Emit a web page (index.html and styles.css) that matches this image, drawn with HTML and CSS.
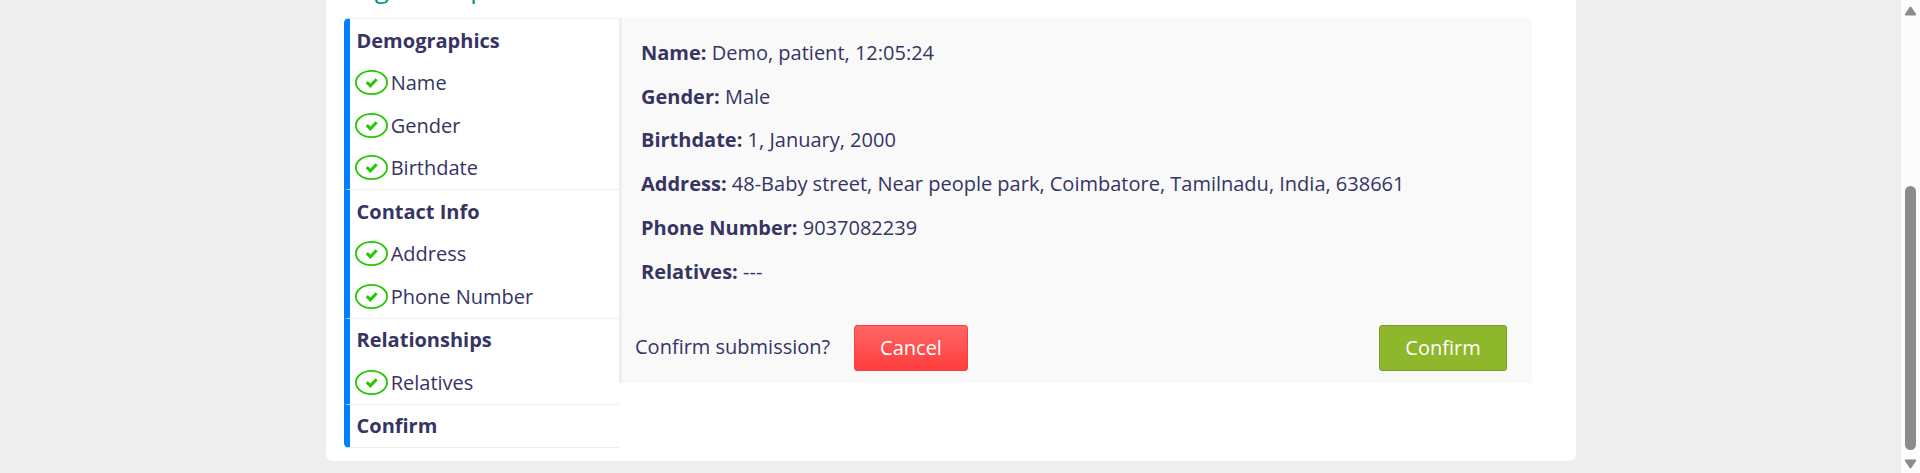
FILE: index.html
```html
<!DOCTYPE html>
<html lang="en">
<head>
<meta charset="utf-8">
<title>Register a patient</title>
<link rel="stylesheet" href="styles.css">
</head>
<body>
<svg class="defs" width="0" height="0"><defs>
<symbol id="check" viewBox="0 0 33 25"><ellipse cx="16.5" cy="12.5" rx="15.6" ry="11.6" fill="none" stroke="#24c800" stroke-width="1.8"/><path d="M11.8 12.1l3.6 3.7 6.2-6.5" fill="none" stroke="#24c800" stroke-width="3"/></symbol>
</defs></svg>
<div class="page">
<main class="card">
<h2 class="title">Register a patient</h2>
<div class="form">
<ul class="steps">
<li class="section s4"><b>Demographics</b>
<span><svg class="tick"><use href="#check"/></svg>Name</span>
<span><svg class="tick"><use href="#check"/></svg>Gender</span>
<span><svg class="tick"><use href="#check"/></svg>Birthdate</span></li>
<li class="section s3"><b>Contact Info</b>
<span><svg class="tick"><use href="#check"/></svg>Address</span>
<span><svg class="tick"><use href="#check"/></svg>Phone Number</span></li>
<li class="section s2"><b>Relationships</b>
<span><svg class="tick"><use href="#check"/></svg>Relatives</span></li>
<li class="section s1"><b>Confirm</b></li>
</ul>
<section class="panel">
<div class="details">
<p><b>Name:</b> Demo, patient, 12:05:24</p>
<p><b>Gender:</b> Male</p>
<p><b>Birthdate:</b> 1, January, 2000</p>
<p><b>Address:</b> 48-Baby street, Near people park, Coimbatore, Tamilnadu, India, 638661</p>
<p><b>Phone Number:</b> 9037082239</p>
<p><b>Relatives:</b> ---</p>
</div>
<div class="actions">
<span class="question">Confirm submission?</span>
<button class="btn cancel">Cancel</button>
<button class="btn confirm">Confirm</button>
</div>
</section>
</div>
</main>
</div>
<div class="scrollbar">
<svg class="arrow" viewBox="0 0 13 10"><path d="M6.5 1.5L11.2 8.5H1.8z"/></svg>
<div class="thumb"></div>
<svg class="arrow" viewBox="0 0 13 10"><path d="M6.5 8.5L1.8 1.5h9.4z"/></svg>
</div>
</body>
</html>
```
FILE: styles.css
```css
* { box-sizing: border-box; }
body {
  margin: 0;
  height: 473px;
  overflow: hidden;
  display: flex;
  background: #eee;
  color: #363463;
  font: 20px/27px "Open Sans", sans-serif;
}
.defs { position: absolute; }
.page { flex: 1; padding-left: 326px; }
.card {
  width: 1250px;
  height: 461px;
  padding: 0 18px;
  background: #fff;
  border-radius: 0 0 6px 6px;
}
.title {
  height: 18px;
  margin: 0;
  padding-bottom: 12px;
  display: flex;
  align-items: flex-end;
  color: #009384;
  font-size: 26px;
  font-weight: 400;
  line-height: 36px;
}
.form { display: flex; align-items: flex-start; }
.steps {
  width: 275px;
  margin: 0;
  padding: 0;
  list-style: none;
}
.section {
  display: flex;
  flex-direction: column;
  border-left: 6px solid #007fff;
  border-bottom: 1px solid #eee;
}
.section:first-child { border-top: 1px solid #eee; border-top-left-radius: 5px; }
.section:last-child { border-bottom-left-radius: 5px; }
.section b, .section span { display: flex; align-items: center; }
.section b { height: 41px; margin-bottom: 1px; padding-left: 6.5px; }
.section.s4 b, .section.s3 b { height: 42px; margin-bottom: 0; padding-top: 1px; }
.section span { flex: 1; padding-left: 5px; }
.s4 { height: 172px; }
.s3 { height: 129px; }
.s2 { height: 86px; }
.s1 { height: 43px; }
.tick { width: 33px; height: 25px; margin-right: 2.7px; }
.panel {
  width: 913px;
  height: 365px;
  border-left: 3px solid #eee;
  background: #f9f9f9;
  display: flex;
  flex-direction: column;
}
.details { padding: 21px 0 0 19px; }
.details p { margin: 0 0 16.74px; white-space: nowrap; }
.actions {
  margin-top: auto;
  padding: 0 25px 12px 13px;
  display: flex;
  align-items: center;
}
.question { width: 219px; padding-bottom: 3px; }
.btn {
  height: 46px;
  padding: 0 0 2px;
  border-radius: 3px;
  color: #fff;
  font: inherit;
}
.cancel { width: 114px; border: 1px solid #ff3d3d; background: linear-gradient(#ff6666, #ff3d3d); }
.confirm { width: 128px; margin-left: auto; border: 1px solid #7a9e25; background: #8fb72b; }
.scrollbar {
  width: 19px;
  height: 473px;
  padding: 6px 0 4px 3px;
  display: flex;
  flex-direction: column;
  background: #fcfcfc;
}
.arrow {
  width: 13px;
  height: 10px;
  fill: #8b8b8b;
  stroke: #8b8b8b;
  stroke-width: 2;
  stroke-linejoin: round;
}
.thumb { width: 11px; height: 264px; margin: 170px 0 auto 1px; border-radius: 6px; background: #8b8b8b; }
```
